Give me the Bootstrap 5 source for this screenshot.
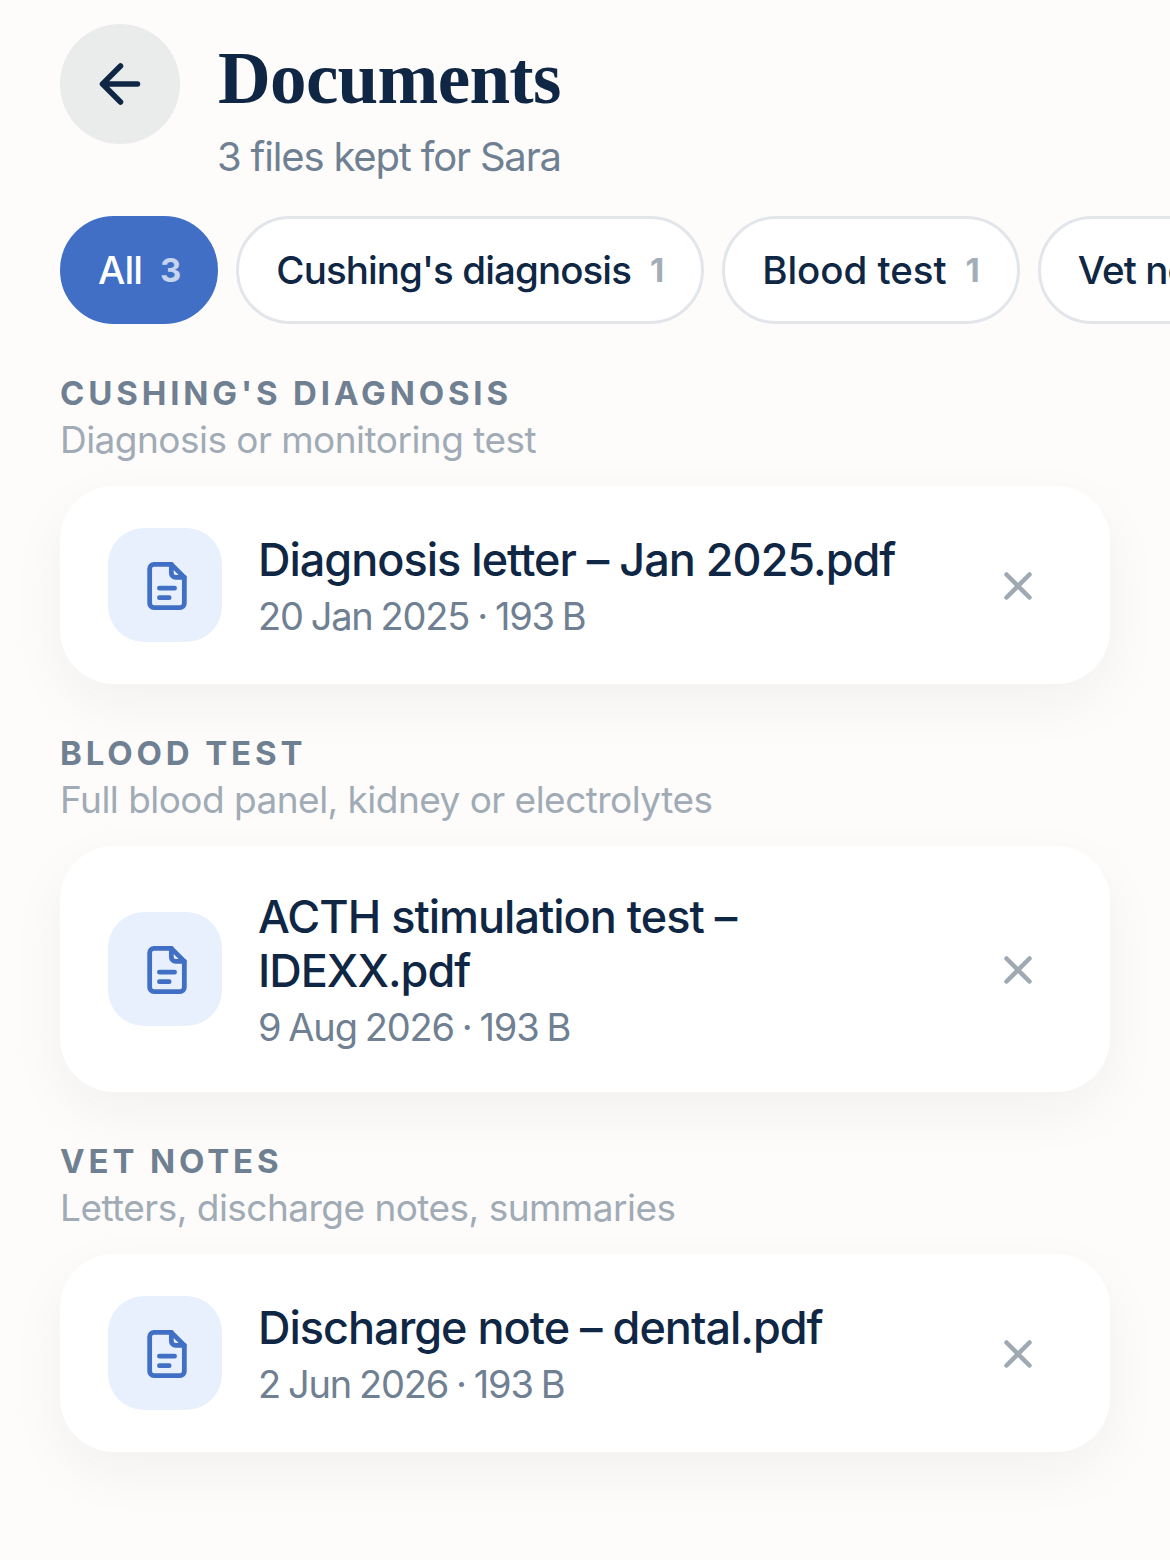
<!DOCTYPE html>
<html>
<head>
    <title>Documents</title>
    <link href="https://cdn.jsdelivr.net/npm/bootstrap@5.3.0/dist/css/bootstrap.min.css" rel="stylesheet">
    <style>
        html, body { height: 100%; }
        body {
            background: #fdfcfa;
            color: #0f2744;
            font-family: Inter, "Liberation Sans", sans-serif;
            overflow: hidden;
        }
        .page { padding: 24px 60px 0; }
        .back-btn {
            width: 120px;
            height: 120px;
            background: #eaecec;
            border: 0;
            flex: none;
        }
        .head-text { margin-left: 38px; padding-top: 13px; }
        .page-title {
            font-family: "Liberation Serif", serif;
            font-weight: 700;
            font-size: 73px;
            line-height: 84px;
            letter-spacing: -.67px;
            margin: 0;
        }
        .page-sub {
            font-size: 40px;
            line-height: 52px;
            letter-spacing: -1.18px;
            color: #6f8092;
            margin: 10px 0 0 -1px;
        }
        .chips { margin: 33px -60px 0 0; gap: 18px; overflow: hidden; }
        .chip {
            height: 108px;
            padding: 2px 37px 0;
            border: 3px solid #e2e6eb;
            border-radius: 54px;
            background: #fff;
            font-size: 38.5px;
            font-weight: 500;
            letter-spacing: -.9px;
            white-space: nowrap;
            flex: none;
            gap: 19px;
        }
        .chip-on { background: #406fc5; border-color: #406fc5; color: #fff; padding: 2px 34px 0 35px; gap: 18px; }
        .chip-roomy { letter-spacing: -.05px; }
        .chip-count { font-size: 33px; font-weight: 700; color: #a3adb8; letter-spacing: 0; }
        .chip-on .chip-count { color: #c6d4ee; }
        .group-label {
            font-size: 33px;
            line-height: 40px;
            font-weight: 700;
            letter-spacing: 3.85px;
            color: #6f8092;
            text-transform: uppercase;
            margin: 0;
        }
        .group-hint {
            font-size: 37px;
            line-height: 48px;
            letter-spacing: -.53px;
            color: #a0abb6;
            margin: 3px 0 22px;
        }
        .group { margin-top: 49px; }
        .doc-card {
            background: #fff;
            border: 0;
            border-radius: 54px;
            padding: 42px 48px;
            box-shadow: 0 20px 56px rgba(30, 40, 50, .05);
        }
        .doc-tile {
            width: 114px;
            height: 114px;
            border-radius: 36px;
            background: #e8f0fe;
            flex: none;
        }
        .doc-icon { margin: 2px 0 0 3px; }
        .doc-body { margin-left: 36px; width: 680px; padding-top: 2px; }
        .doc-name {
            font-size: 45px;
            line-height: 54px;
            font-weight: 500;
            letter-spacing: -1px;
        }
        .doc-meta {
            font-size: 38px;
            line-height: 50px;
            letter-spacing: -1.2px;
            word-spacing: -1.5px;
            color: #6f8092;
            margin: 4px 0 -2px;
        }
        .doc-x { margin: 2px 30px 0 auto; line-height: 0; background: none; border: 0; padding: 0; }
    </style>
</head>
<body>
    <div class="page">
        <!-- header -->
        <div class="d-flex">
            <button class="back-btn rounded-circle d-flex align-items-center justify-content-center p-0">
                <svg width="60" height="60" viewBox="0 0 60 60" fill="none" stroke="#0f2744" stroke-width="5.500" stroke-linecap="round" stroke-linejoin="round"><path d="M47.5 30H12.5M30.500 12 12.5 30l18 18"/></svg>
            </button>
            <div class="head-text">
                <h1 class="page-title">Documents</h1>
                <div class="page-sub">3 files kept for Sara</div>
            </div>
        </div>

        <!-- filter chips -->
        <div class="chips d-flex">
            <div class="chip chip-on d-flex align-items-center">All <span class="chip-count">3</span></div>
            <div class="chip d-flex align-items-center">Cushing's diagnosis <span class="chip-count">1</span></div>
            <div class="chip chip-roomy d-flex align-items-center">Blood test <span class="chip-count">1</span></div>
            <div class="chip d-flex align-items-center">Vet notes <span class="chip-count">1</span></div>
        </div>

        <!-- groups -->
        <div class="group">
            <h2 class="group-label">Cushing's diagnosis</h2>
            <div class="group-hint">Diagnosis or monitoring test</div>
            <div class="doc-card card flex-row align-items-center">
                <div class="doc-tile d-flex align-items-center justify-content-center">
                    <svg class="doc-icon" width="52" height="52" viewBox="0 0 24 24" fill="none" stroke="#406fc5" stroke-width="2.200" stroke-linecap="round" stroke-linejoin="round"><path d="M14 2H6a2 2 0 0 0-2 2v16a2 2 0 0 0 2 2h12a2 2 0 0 0 2-2V8z"/><path d="M14 2v4a2 2 0 0 0 2 2h4"/><path d="M8.500 13h7M8.500 17.400h4.500"/></svg>
                </div>
                <div class="doc-body">
                    <div class="doc-name">Diagnosis letter – Jan 2025.pdf</div>
                    <div class="doc-meta">20 Jan 2025 · 193 B</div>
                </div>
                <button class="doc-x">
                    <svg width="28" height="28" viewBox="0 0 28 28" fill="none" stroke="#9fa9b4" stroke-width="4.500" stroke-linecap="round"><path d="M2.500 2.500l23 23M25.500 2.500l-23 23"/></svg>
                </button>
            </div>
        </div>

        <div class="group">
            <h2 class="group-label">Blood test</h2>
            <div class="group-hint">Full blood panel, kidney or electrolytes</div>
            <div class="doc-card card flex-row align-items-center">
                <div class="doc-tile d-flex align-items-center justify-content-center">
                    <svg class="doc-icon" width="52" height="52" viewBox="0 0 24 24" fill="none" stroke="#406fc5" stroke-width="2.200" stroke-linecap="round" stroke-linejoin="round"><path d="M14 2H6a2 2 0 0 0-2 2v16a2 2 0 0 0 2 2h12a2 2 0 0 0 2-2V8z"/><path d="M14 2v4a2 2 0 0 0 2 2h4"/><path d="M8.500 13h7M8.500 17.400h4.500"/></svg>
                </div>
                <div class="doc-body">
                    <div class="doc-name">ACTH stimulation test – IDEXX.pdf</div>
                    <div class="doc-meta">9 Aug 2026 · 193 B</div>
                </div>
                <button class="doc-x">
                    <svg width="28" height="28" viewBox="0 0 28 28" fill="none" stroke="#9fa9b4" stroke-width="4.500" stroke-linecap="round"><path d="M2.500 2.500l23 23M25.500 2.500l-23 23"/></svg>
                </button>
            </div>
        </div>

        <div class="group">
            <h2 class="group-label">Vet notes</h2>
            <div class="group-hint">Letters, discharge notes, summaries</div>
            <div class="doc-card card flex-row align-items-center">
                <div class="doc-tile d-flex align-items-center justify-content-center">
                    <svg class="doc-icon" width="52" height="52" viewBox="0 0 24 24" fill="none" stroke="#406fc5" stroke-width="2.200" stroke-linecap="round" stroke-linejoin="round"><path d="M14 2H6a2 2 0 0 0-2 2v16a2 2 0 0 0 2 2h12a2 2 0 0 0 2-2V8z"/><path d="M14 2v4a2 2 0 0 0 2 2h4"/><path d="M8.500 13h7M8.500 17.400h4.500"/></svg>
                </div>
                <div class="doc-body">
                    <div class="doc-name">Discharge note – dental.pdf</div>
                    <div class="doc-meta">2 Jun 2026 · 193 B</div>
                </div>
                <button class="doc-x">
                    <svg width="28" height="28" viewBox="0 0 28 28" fill="none" stroke="#9fa9b4" stroke-width="4.500" stroke-linecap="round"><path d="M2.500 2.500l23 23M25.500 2.500l-23 23"/></svg>
                </button>
            </div>
        </div>
    </div>
    <script src="https://cdn.jsdelivr.net/npm/bootstrap@5.3.0/dist/js/bootstrap.bundle.min.js"></script>
</body>
</html>
